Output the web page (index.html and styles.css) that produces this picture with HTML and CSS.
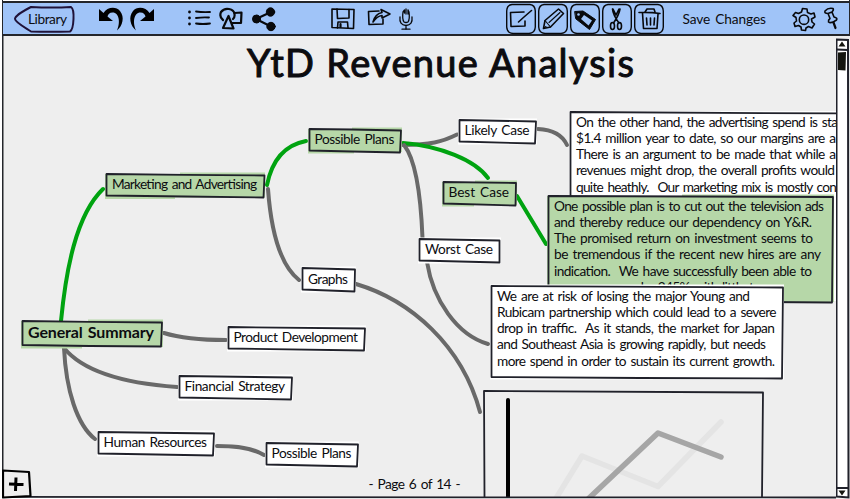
FILE: index.html
```html
<!DOCTYPE html>
<html lang="en">
<head>
<meta charset="utf-8">
<title>YtD Revenue Analysis</title>
<link rel="stylesheet" href="styles.css">
</head>
<body>
<div class="app">
  <header class="toolbar">
    <svg class="back ink" width="64" height="36" viewBox="12 0 64 36"><path class="outline" d="M31 7 Q52 8 71 7 Q74 9 73.500 19 Q73 30 70 31.500 Q50 32 31 31.500 C24 27 15 22 15 19 C15 16 25 10 31 7Z"/><text x="28" y="24" textLength="39">Library</text></svg>
    <div class="group history">
      <svg width="28" height="36" viewBox="97 0 28 36"><path d="M99 9 L103.500 13 C107 7 116 6 120 11 C125 17 122.500 26 117 30.500 C120.500 23 119.500 12.500 112.500 12.500 C109.500 12.500 108 14.500 107.500 16.500 L113 21 L99 21Z"/></svg>
      <svg width="28" height="36" viewBox="128 0 28 36"><path d="M154 9 L149.500 13 C146 7 137 6 133 11 C128 17 130.500 26 136 30.500 C132.500 23 133.500 12.500 140.500 12.500 C143.500 12.500 145 14.500 145.500 16.500 L140 21 L154 21Z"/></svg>
    </div>
    <div class="group insert">
      <svg class="ink" width="26" height="36" viewBox="186 0 26 36"><path class="dots" d="M189.500 12v.1M189.500 18v.1M189.500 24v.1"/><path class="list" d="M196 11.500 Q203 12.500 210 12M196 18 Q203 17 209 17.500M196 23.500 Q203 24.500 210 23.500"/></svg>
      <svg class="ink" width="26" height="36" viewBox="218 0 26 36"><g class="bold"><path d="M223 20 Q219 17 221 12 Q224 8 229 9 Q234 10 234.500 14 Q235 17 233 19"/><path d="M234.500 13 L241.500 12.500 L241 23 L232.500 23"/><path d="M228.500 16 L223 28 L233.500 28.500Z"/></g></svg>
      <svg class="ink" width="28" height="36" viewBox="250 0 28 36"><path class="bold" d="M271 12 L256 19 L271 26.500"/><circle class="solid" cx="256.500" cy="19" r="4"/><circle class="solid" cx="270.500" cy="12" r="4.200"/><circle class="solid" cx="271" cy="26.500" r="4.200"/></svg>
    </div>
    <div class="group files">
      <svg class="ink" width="26" height="36" viewBox="330 0 26 36"><path d="M332 9 L354 9.500 L353.500 28.500 L332 27.500Z"/><path d="M337 9 L337.500 18.500 L349 18 L349 9.500M337.500 28 L338 22 L347.500 22 L348 28"/><path class="bold" d="M340.500 24v3"/></svg>
      <svg class="ink" width="26" height="36" viewBox="366 0 26 36"><path d="M379 11 L368.500 11.500 L369 24.500 L383 24 L383 19"/><path d="M373 22 Q375 14 382 12.500 L381 9.500 L390 14 L382 18 L382 15.500 Q377 16 373 22Z"/></svg>
      <svg class="ink thin" width="18" height="36" viewBox="397 0 18 36"><path d="M403 12 Q402 19 404 22 Q406 23 408 22 Q410 19 409 12M403 12 L404.500 10 L404.500 13M406 9 V14M408 10 V14M409 12 L408 10"/><path d="M400 17 Q399 25 406 25.500 Q413 25 412 17M406 26 V29"/><path class="bold" d="M402 29.200H410"/></svg>
    </div>
    <div class="group edit">
      <svg class="ink" width="30" height="36" viewBox="506 0 30 36"><path class="frame" d="M512 4.500H530Q535 5 535.300 11V27Q535 33 529 33.500H513Q507 33 506.700 27V11Q507 5 512 4.500Z"/><path d="M524 12 L510.500 12.500 L511 26.500 L525 26 L525 21M531.500 10.500 Q525 16 518.500 22"/></svg>
      <svg class="ink" width="30" height="36" viewBox="538 0 30 36"><path class="frame" d="M544 4.500H562Q567 5 567.300 11V27Q567 33 561 33.500H545Q539 33 538.700 27V11Q539 5 544 4.500Z"/><path d="M543.500 28.500 L545 20.500 L558.500 9 L563.500 13.500 L550.500 27Z"/><path class="hair" d="M545 20.500 L550.500 27M549 22.500 L560 12.500M543.500 28.500 L546 26.500"/></svg>
      <svg class="ink" width="30" height="36" viewBox="570 0 30 36"><path class="frame" d="M576 4.500H594Q599 5 599.300 11V27Q599 33 593 33.500H577Q571 33 570.700 27V11Q571 5 576 4.500Z"/><path class="solid" d="M575 11.500 L583 11 L595.500 19.500 L589.500 29.500 L576 19Z"/><path class="tag-fill" d="M584 15 L581 19 L588.500 25.500 L592 20.500Z"/><circle class="tag-fill" cx="578.500" cy="14.500" r="1.300"/></svg>
      <svg class="ink" width="30" height="36" viewBox="602 0 30 36"><path class="frame" d="M608 4.500H626Q631 5 631.300 11V27Q631 33 625 33.500H609Q603 33 602.700 27V11Q603 5 608 4.500Z"/><path d="M612.500 9 Q613 15 619 23M620 9 Q619 15 613.500 23M613 9 L616 15M619 9 L616 15"/><ellipse cx="612.500" cy="26" rx="2" ry="3.500"/><ellipse cx="619.500" cy="26" rx="2" ry="3.500"/></svg>
      <svg class="ink" width="30" height="36" viewBox="634 0 30 36"><path class="frame" d="M640 4.500H658Q663 5 663.300 11V27Q663 33 657 33.500H641Q635 33 634.700 27V11Q635 5 640 4.500Z"/><path d="M639 12.500 Q650 12 660 13.500M645 12 L647 9 L654 9 L655 12M642.500 13 L643.500 28.500 L657 28.500 L658 14M646.500 18 L647 25M650.500 18 V25M654.500 18 L654 25"/></svg>
    </div>
    <svg class="save" width="90" height="36" viewBox="680 0 90 36"><text x="682.500" y="24" textLength="83.500">Save Changes</text></svg>
    <div class="group settings">
      <svg class="ink" width="26" height="36" viewBox="791 0 26 36"><path d="M801.500 12 L802.500 8.500 L807 9 L807.500 12.500 L811 14 L814 13 L815 17 L811.500 19 L812 22 L814.500 24 L812 28 L808.500 26.500 L806 28 L805.500 30.500 L801.500 30 L801 27 L798.500 25.500 L795 26.500 L794 23 L796.500 21 L796 17.500 L793 15.500 L795.500 12.500 L798.500 13.500Z"/><circle cx="804" cy="19.700" r="4.700"/></svg>
      <svg class="ink" width="18" height="36" viewBox="822 0 18 36"><path d="M825 11 Q828 7.500 833 8.500 Q834 10 832 12 L834 17 Q838 18 836.500 20 Q831 24 828.500 22 Q828 20 830 18.500 L828 13.500 Q824 13.500 825 11ZM828 13.500 L832 12"/><path class="bold" d="M833.500 22.500 L835.500 28"/></svg>
    </div>
  </header>

  <main class="workspace">
    <svg class="map" width="834" height="463" viewBox="2 36 834 463">
      <text class="title" x="247" y="77" textLength="387">YtD Revenue Analysis</text>
      <text x="368.500" y="489" textLength="92">- Page 6 of 14 -</text>

      <g class="links">
        <path d="M403 145 C430 145 442 142 457 134.500"/>
        <path d="M538 129 Q560 130 567 145"/>
        <path d="M268 189 C271 230 280 265 299 280"/>
        <path d="M356 284 C410 300 462 345 480 412"/>
        <path d="M164 333 C180 338 200 340 226 340"/>
        <path d="M64 348 C82 370 120 383 177 387"/>
        <path d="M64 348 C66 390 77 425 95 439"/>
        <path d="M217 446 C238 446 252 448 264 455"/>
        <path class="chosen" d="M403 143 C440 146 475 160 488 178"/>
        <path class="chosen" d="M517 196 L546 244"/>
        <path class="chosen" d="M61 321 C66 270 76 215 103 189"/>
        <path class="chosen" d="M267 185 C272 160 285 145 306 141"/>
        <path d="M404 145 C416 160 421 200 422.500 238"/>
        <path d="M427 262 C433 300 457 335 488 344"/>
      </g>

      <g class="node picked"><path class="fill" d="M105 174H180V172.500H265V197.500H175V199H105Z"/><path class="edge" d="M106.500 174 L185 174.800 L264.500 175.500 L263.500 197.500 L185 196.500 L106.500 195.500Z"/><text x="112" y="189" textLength="145">Marketing and Advertising</text></g>
      <g class="node picked"><path class="fill" d="M308 129H352V127.500H402V152H354V153.500H308Z"/><path class="edge" d="M309.500 129 L352 129.500 L401 130.500 L400 152.500 L352 151.500 L309.500 150.500Z"/><text x="314.500" y="144" textLength="80">Possible Plans</text></g>
      <g class="node"><path class="fill" d="M458 118.500H537V144.500H458Z"/><path class="edge" d="M459.500 120 L536 121.500 L535 143.500 L459.500 141.500Z"/><text x="464.500" y="135" textLength="65">Likely Case</text></g>
      <g class="node picked"><path class="fill" d="M442 182H475V180.500H517V205H474V206.500H442Z"/><path class="edge" d="M443.500 182 L516 183 L515.500 205.500 L443.500 203.500Z"/><text x="448.500" y="197" textLength="60.500">Best Case</text></g>
      <g class="node"><path class="fill" d="M418 237.500H501V263.500H418Z"/><path class="edge" d="M419.500 239 L499.500 240.500 L499.500 262.500 L419.500 260.500Z"/><text x="425" y="254" textLength="68">Worst Case</text></g>
      <g class="node"><path class="fill" d="M301 266.500H356V292.500H301Z"/><path class="edge" d="M302.500 268 L355 269.500 L354.500 291.500 L302.500 289.500Z"/><text x="308" y="283.500" textLength="40">Graphs</text></g>
      <g class="node picked root"><path class="fill" d="M21 321H88V319.500H163V347H82V348.500H21Z"/><path class="edge" d="M22.500 321 L90 321.800 L162 322.500 L161 346.500 L90 346 L22.500 345Z"/><text x="28" y="338" textLength="126">General Summary</text></g>
      <g class="node"><path class="fill" d="M227 325.500H366V351.500H227Z"/><path class="edge" d="M228.500 327 L365 328.500 L364 350.500 L228.500 348.500Z"/><text x="233.500" y="342" textLength="124.500">Product Development</text></g>
      <g class="node"><path class="fill" d="M178 374.500H293V400.500H178Z"/><path class="edge" d="M179.500 376 L292 377.500 L291 399.500 L179.500 397.500Z"/><text x="184.500" y="391" textLength="100.500">Financial Strategy</text></g>
      <g class="node"><path class="fill" d="M97 430.500H215V456.500H97Z"/><path class="edge" d="M98.500 432 L214 433.500 L213 455.500 L98.500 453.500Z"/><text x="103.500" y="447" textLength="103.500">Human Resources</text></g>
      <g class="node"><path class="fill" d="M265 441.500H359V467.500H265Z"/><path class="edge" d="M266.500 443 L358 444.500 L357 466.500 L266.500 464.500Z"/><text x="271.500" y="458" textLength="80">Possible Plans</text></g>

      <g class="node card"><path class="fill" d="M569 111H850V301H569Z"/><path class="edge" d="M850 113.500 L570.500 112 V218"/>
        <text x="576" y="127" textLength="262">On the other hand, the advertising spend is sta</text>
        <text x="576" y="143" textLength="260">$1.4 million year to date, so our margins are a</text>
        <text x="576" y="159" textLength="260">There is an argument to be made that while a</text>
        <text x="576" y="175" textLength="259">revenues might drop, the overall profits would</text>
        <text x="576" y="192" textLength="261">quite heathly.&#160; Our marketing mix is mostly con</text>
      </g>
      <g class="node card picked"><path class="fill" d="M547 196H682V194.500H834V302H547Z"/><path class="edge" d="M548.500 196 L833 197 L832 302.500 L690 301.500 L548.500 302Z"/>
        <text x="554" y="211" textLength="270">One possible plan is to cut out the television ads</text>
        <text x="554" y="227" textLength="258">and thereby reduce our dependency on Y&amp;R.</text>
        <text x="554" y="243" textLength="259">The promised return on investment seems to</text>
        <text x="554" y="259" textLength="267">be tremendous if the recent new hires are any</text>
        <text x="554" y="276" textLength="258">indication.&#160; We have successfully been able to</text>
        <text x="554" y="292" textLength="207">ease our scope by 245% with little to</text>
      </g>
      <g class="node card"><path class="fill" d="M490 284.500H784V379.500H490Z"/><path class="edge" d="M491.500 286 L783 287.500 L782 378.500 L640 378 L491.500 377Z"/>
        <text x="497" y="301" textLength="253">We are at risk of losing the major Young and</text>
        <text x="497" y="317" textLength="279.500">Rubicam partnership which could lead to a severe</text>
        <text x="497" y="333" textLength="278">drop in traffic.&#160; As it stands, the market for Japan</text>
        <text x="497" y="349" textLength="269">and Southeast Asia is growing rapidly, but needs</text>
        <text x="497" y="366" textLength="278">more spend in order to sustain its current growth.</text>
      </g>
      <g class="chart">
        <path class="edge" d="M484.500 497 L484 391 L763 392.500 L762 497"/>
        <path class="previous" d="M555 500 L582 456 L658 486.500 L721 422"/>
        <path class="current" d="M587 500 L658 433 L721 457"/>
        <path class="axis" d="M508 400 V500"/>
      </g>
      <path class="below" d="M2 498 H836 V499 H2Z"/>
      <path class="edge" d="M2 496.800 L480 497.300 L836 497.500"/>
      <g class="add"><path d="M3 470.500 L29 472 L30.500 496 L3 497.500Z"/><path class="plus" d="M9 484 L23.500 484.500 M16 477.500 L15.500 491"/></g>
    </svg>
    <svg class="scrollbar" width="14" height="463" viewBox="836 36 14 463">
      <path class="track" d="M836.500 39.500 L848 40 L848.500 497.500 L836.500 496.500Z"/>
      <path class="edge" d="M836.500 49.500 L848 50M836.500 488 H848"/>
      <path class="mark" d="M838.500 46.500 L842 41.500 L845.500 46.500Z M838.500 490.500 H845.500 L842 495.500Z M838 52.500 L846 52 L845.500 70.500 L838 70Z"/>
    </svg>
  </main>
</div>
</body>
</html>
```
FILE: styles.css
```css
body { margin: 0; background: #fff; overflow: hidden; }
svg { display: block; flex: none; }
text { font: 400 13.7px Lato, "Open Sans", sans-serif; word-spacing: 1.5px; fill: #0c0c10; }

.app { display: flex; flex-direction: column; width: 850px; height: 499px; }

.toolbar {
  display: flex;
  box-sizing: border-box;
  height: 36px;
  margin-left: 2px;
  padding-left: 10px;
  background: linear-gradient(#fff 1px, #24262b 1px 3px, #a0c4f8 3px 34px, #24262b 34px);
  border-right: 1px solid #24262b;
  border-left: 1px solid #24262b;
  padding-left: 9px;
}
.group { display: flex; }
.history { gap: 3px; margin-left: 21px; }
.insert { gap: 6px; margin-left: 30px; }
.files { margin-left: 52px; gap: 10px; }
.files svg:last-child { margin-left: -5px; }
.edit { gap: 2px; margin-left: 91px; }
.save { margin-left: 16px; }
.settings { gap: 5px; margin-left: 21px; }

.ink path, .ink circle, .ink ellipse {
  fill: none;
  stroke: #08090c;
  stroke-width: 1.6;
  stroke-linecap: round;
  stroke-linejoin: round;
}
.ink .bold, .ink .bold path { stroke-width: 2.2; }
.ink .list { stroke-width: 1.8; }
.ink .hair { stroke-width: 1.1; }
.ink.thin path { stroke-width: 1.3; }
.ink .dots { stroke-width: 2.8; }
.ink .frame { stroke-width: 1.4; }
.ink .solid { fill: #08090c; stroke-width: 1; }
.ink .tag-fill { fill: #a0c4f8; stroke: none; }
.ink .outline { stroke: #1f1238; stroke-width: 2; }

.workspace { display: flex; height: 463px; }
.map {
  box-sizing: border-box;
  margin-left: 2px;
  background: #eee;
  box-shadow: inset 1.5px 0 #24262b;
}
.title { font-size: 38px; word-spacing: 0; stroke: #0c0c10; stroke-width: 1; stroke-linejoin: round; }

.links path { fill: none; stroke: #696969; stroke-width: 4; stroke-linecap: round; }
.links .chosen { stroke: #00a310; }

.edge { fill: none; stroke: #20212a; stroke-width: 1.8; stroke-linejoin: round; }
.fill { fill: #fff; }
.picked .fill { fill: #b6d7a8; }
.root text { font-size: 16px; font-weight: 700; }

.chart path { fill: none; stroke-linecap: round; stroke-linejoin: round; }
.chart .previous { stroke: #e4e4e4; stroke-width: 5.5; }
.chart .current { stroke: #a6a6a6; stroke-width: 5.5; }
.chart .axis { stroke: #000; stroke-width: 4; }
.below { fill: #fff; }

.add path { fill: #eee; stroke: #000; stroke-width: 2.2; stroke-linejoin: round; }
.add .plus { stroke-width: 3; }

.scrollbar { background: #eee; }
.track { fill: #fff; stroke: #20212a; stroke-width: 2; }
.mark { fill: #14150f; }
```
